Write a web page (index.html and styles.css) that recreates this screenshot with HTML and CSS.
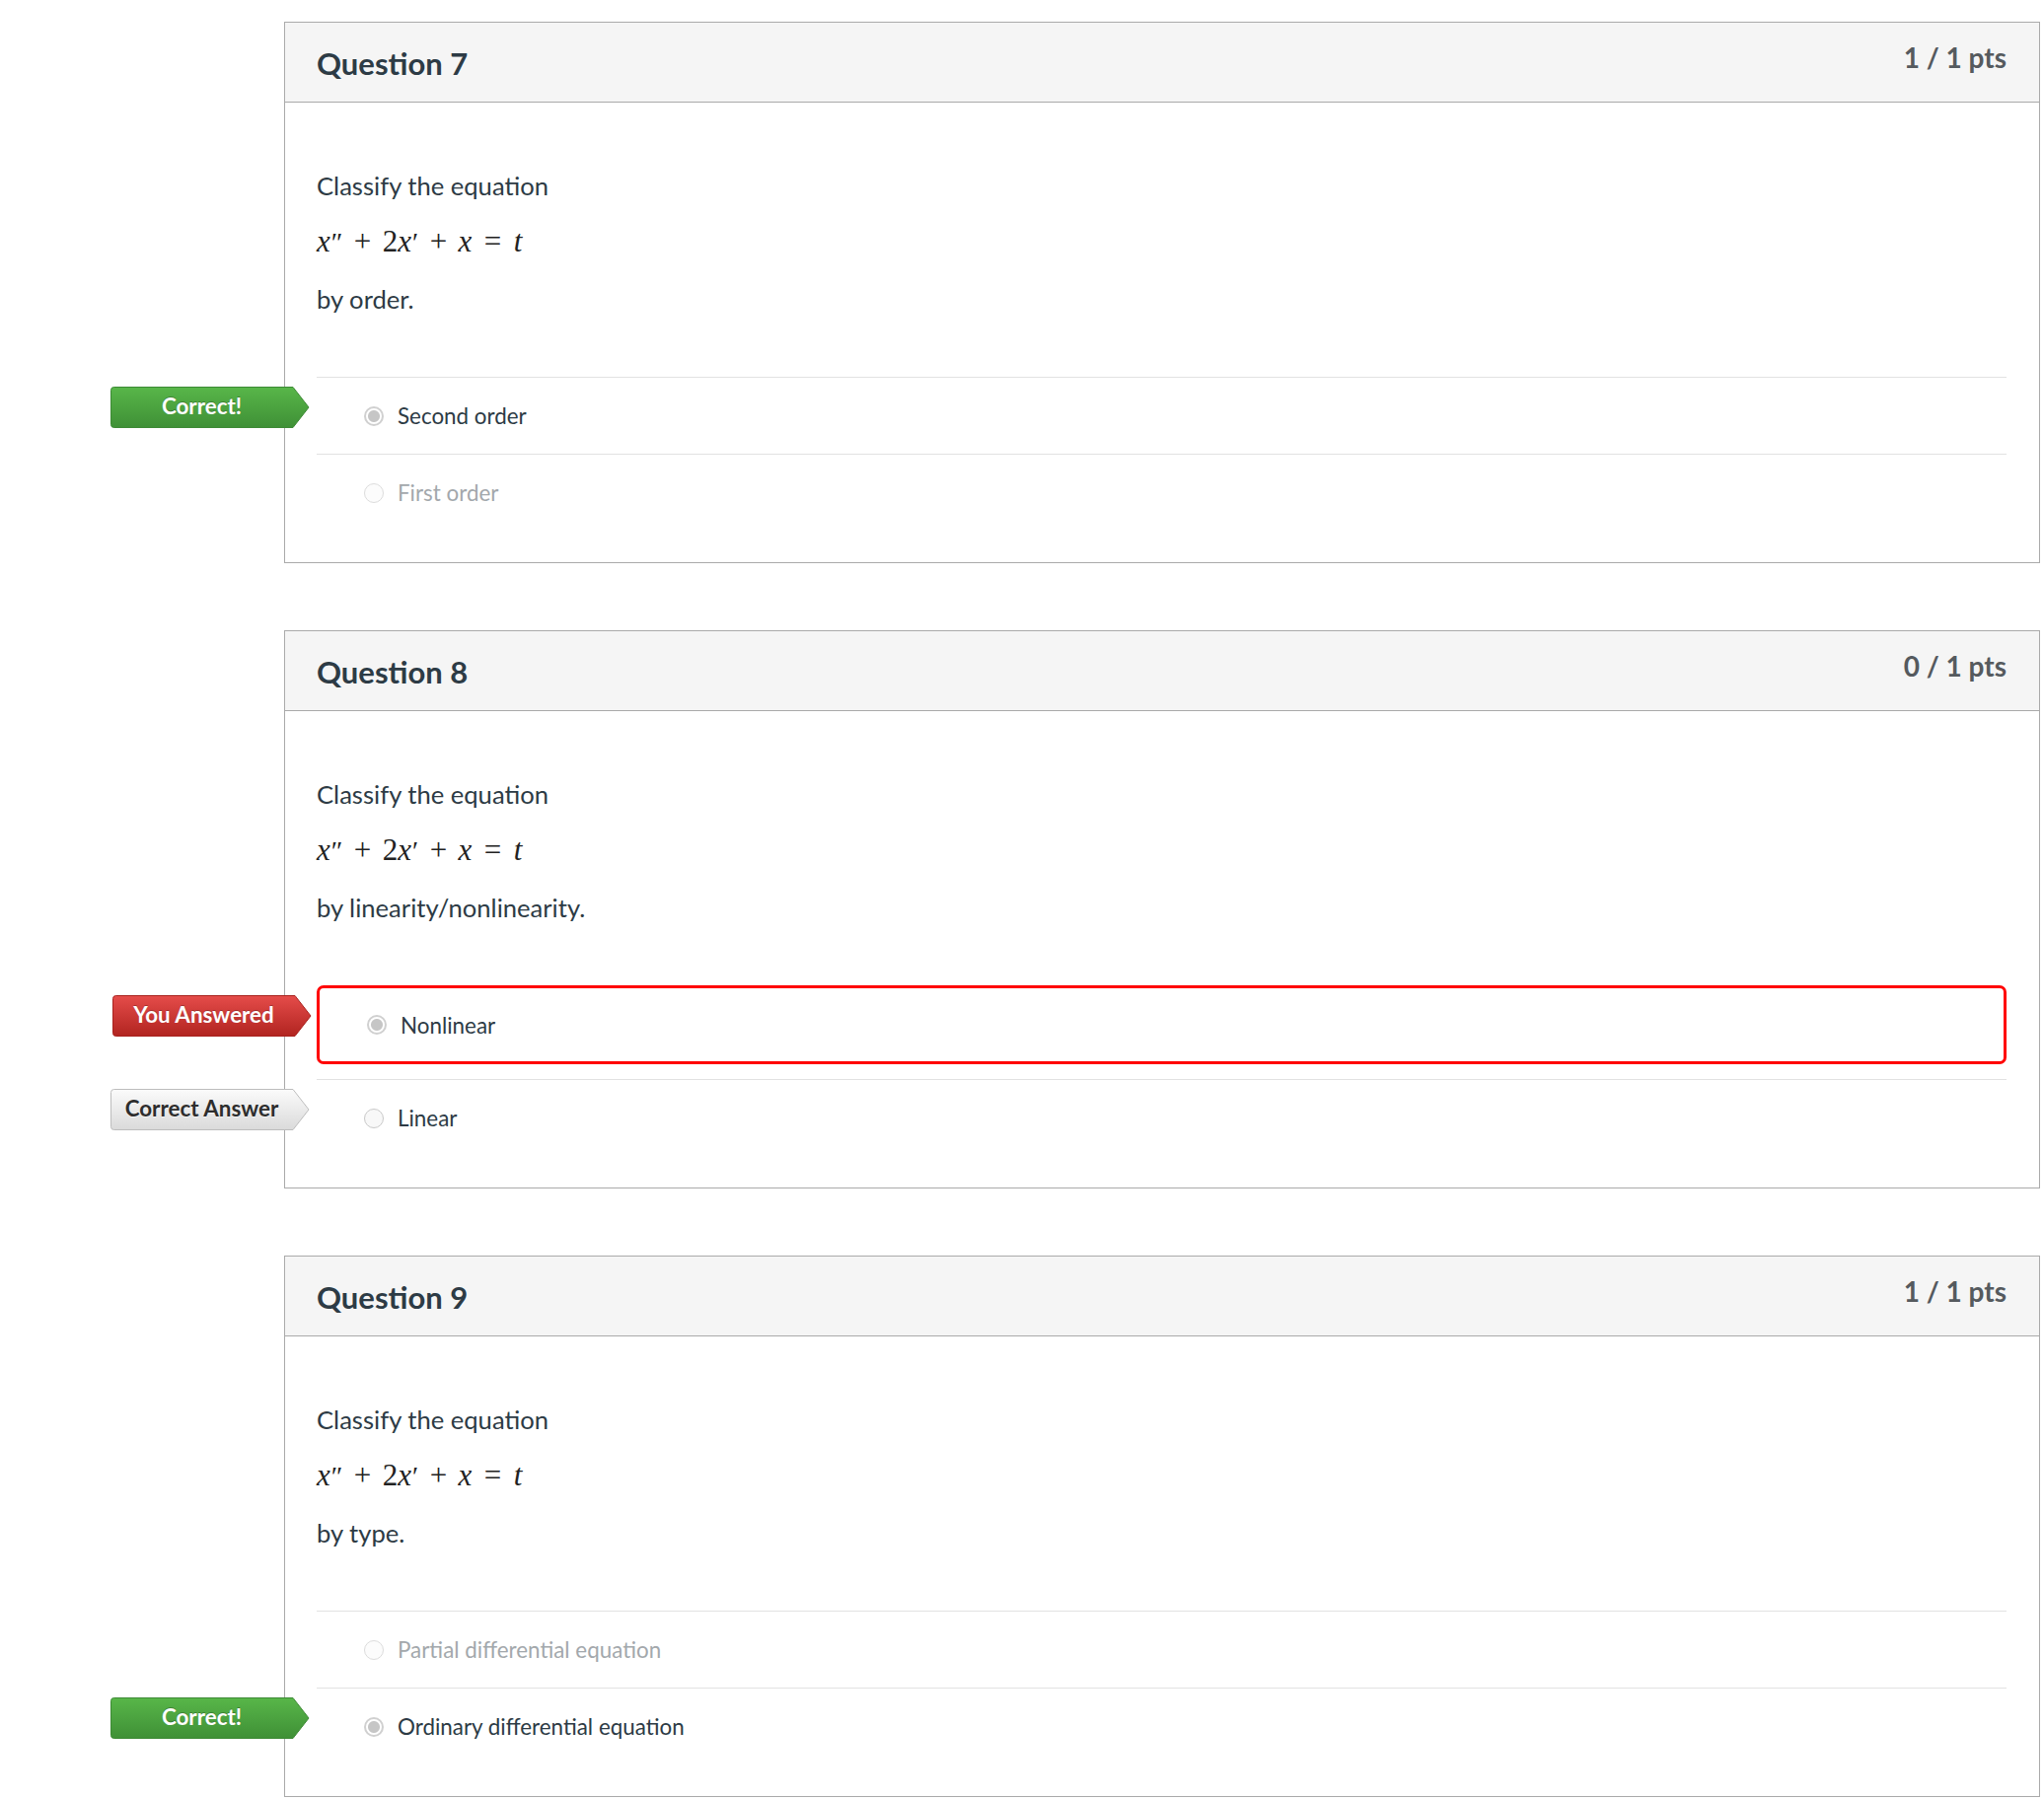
FILE: index.html
```html
<!DOCTYPE html>
<html>
<head>
<meta charset="utf-8">
<link rel="stylesheet" href="styles.css">
</head>
<body>
<svg class="defs" width="0" height="0">
  <defs>
    <linearGradient id="g-green" x1="0" y1="0" x2="0" y2="1">
      <stop offset="0" stop-color="#58b649"/>
      <stop offset="1" stop-color="#3f9036"/>
    </linearGradient>
    <linearGradient id="g-red" x1="0" y1="0" x2="0" y2="1">
      <stop offset="0" stop-color="#e54c4a"/>
      <stop offset="1" stop-color="#b12420"/>
    </linearGradient>
    <linearGradient id="g-grey" x1="0" y1="0" x2="0" y2="1">
      <stop offset="0" stop-color="#fbfbfb"/>
      <stop offset="1" stop-color="#dadada"/>
    </linearGradient>
  </defs>
</svg>
<div class="quiz">

  <div class="question">
    <div class="q-header">
      <div class="q-name">Question 7</div>
      <div class="q-pts">1 / 1 pts</div>
    </div>
    <div class="q-body">
      <div class="q-text">
        <p>Classify the equation</p>
        <p class="math"><i>x</i><span class="pr">″</span><span class="op">+</span>2<i>x</i><span class="pr">′</span><span class="op">+</span><i>x</i><span class="rel">=</span><i>t</i></p>
        <p>by order.</p>
      </div>
      <div class="answers">
        <div class="answer">
          <div class="arrow-label green">
            <svg viewBox="0 0 202 42" width="202" height="42"><path d="M3.5 0.5 H185 L201 21 L185 41.5 H3.5 Q0.5 41.5 0.5 38.5 V3.5 Q0.5 0.5 3.5 0.5 Z" fill="url(#g-green)" stroke="#3d8a35" stroke-width="1"/></svg>
            <span>Correct!</span>
          </div>
          <span class="radio checked"></span>
          <span class="a-text">Second order</span>
        </div>
        <div class="answer muted">
          <span class="radio"></span>
          <span class="a-text">First order</span>
        </div>
      </div>
    </div>
  </div>

  <div class="question">
    <div class="q-header">
      <div class="q-name">Question 8</div>
      <div class="q-pts">0 / 1 pts</div>
    </div>
    <div class="q-body">
      <div class="q-text">
        <p>Classify the equation</p>
        <p class="math"><i>x</i><span class="pr">″</span><span class="op">+</span>2<i>x</i><span class="pr">′</span><span class="op">+</span><i>x</i><span class="rel">=</span><i>t</i></p>
        <p>by linearity/nonlinearity.</p>
      </div>
      <div class="answers">
        <div class="answer wrong">
          <div class="arrow-label red">
            <svg viewBox="0 0 202 42" width="202" height="42"><path d="M3.5 0.5 H185 L201 21 L185 41.5 H3.5 Q0.5 41.5 0.5 38.5 V3.5 Q0.5 0.5 3.5 0.5 Z" fill="url(#g-red)" stroke="#a8221e" stroke-width="1"/></svg>
            <span>You Answered</span>
          </div>
          <span class="radio checked"></span>
          <span class="a-text">Nonlinear</span>
        </div>
        <div class="answer">
          <div class="arrow-label grey">
            <svg viewBox="0 0 202 42" width="202" height="42"><path d="M3.5 0.5 H185 L201 21 L185 41.5 H3.5 Q0.5 41.5 0.5 38.5 V3.5 Q0.5 0.5 3.5 0.5 Z" fill="url(#g-grey)" stroke="#bdbdbd" stroke-width="1"/></svg>
            <span>Correct Answer</span>
          </div>
          <span class="radio"></span>
          <span class="a-text">Linear</span>
        </div>
      </div>
    </div>
  </div>

  <div class="question">
    <div class="q-header">
      <div class="q-name">Question 9</div>
      <div class="q-pts">1 / 1 pts</div>
    </div>
    <div class="q-body">
      <div class="q-text">
        <p>Classify the equation</p>
        <p class="math"><i>x</i><span class="pr">″</span><span class="op">+</span>2<i>x</i><span class="pr">′</span><span class="op">+</span><i>x</i><span class="rel">=</span><i>t</i></p>
        <p>by type.</p>
      </div>
      <div class="answers">
        <div class="answer muted">
          <span class="radio"></span>
          <span class="a-text">Partial differential equation</span>
        </div>
        <div class="answer">
          <div class="arrow-label green">
            <svg viewBox="0 0 202 42" width="202" height="42"><path d="M3.5 0.5 H185 L201 21 L185 41.5 H3.5 Q0.5 41.5 0.5 38.5 V3.5 Q0.5 0.5 3.5 0.5 Z" fill="url(#g-green)" stroke="#3d8a35" stroke-width="1"/></svg>
            <span>Correct!</span>
          </div>
          <span class="radio checked"></span>
          <span class="a-text">Ordinary differential equation</span>
        </div>
      </div>
    </div>
  </div>

</div>
</body>
</html>
```

FILE: styles.css
```css
html, body {
  margin: 0;
  padding: 0;
  background: #ffffff;
}

body {
  font-family: Lato, "Noto Sans", "Liberation Sans", sans-serif;
  color: #2d3b45;
}

.defs {
  position: absolute;
  width: 0;
  height: 0;
}

.quiz {
  margin: 0 4px 0 288px;
  padding-top: 22px;
  display: flex;
  flex-direction: column;
  gap: 68px;
}

.question {
  border: 1px solid #aaaaaa;
  background: #ffffff;
}

.q-header {
  height: 80px;
  background: #f5f5f5;
  border-bottom: 1px solid #aaaaaa;
  display: flex;
  justify-content: space-between;
  align-items: flex-start;
  padding: 0 33px 0 32px;
}

.q-name {
  font-size: 31px;
  font-weight: 700;
  line-height: 36px;
  margin-top: 23px;
  color: #2d3b45;
}

.q-pts {
  font-size: 28px;
  font-weight: 700;
  line-height: 34px;
  margin-top: 18px;
  color: #555a5e;
}

.q-body {
  padding: 66px 33px 32px 32px;
}

.q-text p {
  margin: 0 0 21px 0;
  font-size: 25.6px;
  line-height: 36px;
}

.q-text p:last-child {
  margin-bottom: 0;
}

.q-text p.math {
  font-family: "Liberation Serif", "DejaVu Serif", serif;
  font-size: 31px;
  color: #222222;
}

.math i {
  font-style: italic;
}

.math .pr {
  font-size: 0.9em;
  margin-left: 1px;
}

.math .op {
  margin: 0 0.37em;
}

.math .rel {
  margin: 0 0.4em;
}

.answers {
  margin-top: 61px;
}

.answer {
  position: relative;
  box-sizing: border-box;
  height: 78px;
  border-top: 1px solid #e2e2e2;
  display: flex;
  align-items: center;
  padding: 0 0 0 48px;
  font-size: 22.4px;
}

.answer.wrong {
  height: 80px;
  border: 3px solid #ff0000;
  border-radius: 7px;
  padding: 0 0 0 48px;
  margin-top: 2px;
  margin-bottom: 15px;
}

.radio {
  box-sizing: border-box;
  width: 20px;
  height: 20px;
  border-radius: 50%;
  border: 1.5px solid #c9c9c9;
  background: #f8f8f8;
  flex: none;
}

.radio.checked {
  border: 2px solid #d0d0d0;
  background: radial-gradient(circle, #c6c6c6 0, #c6c6c6 5.5px, #ffffff 6.5px);
}

.a-text {
  margin-left: 14px;
  color: #2d3b45;
}

.answer.muted .a-text {
  color: #a3a8ac;
}

.answer.muted .radio {
  border-color: #dcdcdc;
  background: #fcfcfc;
}

.arrow-label {
  position: absolute;
  left: -209px;
  top: 9px;
  width: 202px;
  height: 42px;
}

.answer.wrong .arrow-label {
  left: -210px;
  top: 7px;
}

.arrow-label svg {
  position: absolute;
  left: 0;
  top: 0;
}

.arrow-label span {
  position: relative;
  display: block;
  width: 185px;
  text-align: center;
  font-size: 22.4px;
  font-weight: 700;
  line-height: 40px;
  color: #ffffff;
  text-shadow: 0 -1px 0 rgba(0, 0, 0, 0.25);
}

.arrow-label.grey span {
  color: #2d2d2d;
  text-shadow: 0 1px 0 rgba(255, 255, 255, 0.6);
}
```
